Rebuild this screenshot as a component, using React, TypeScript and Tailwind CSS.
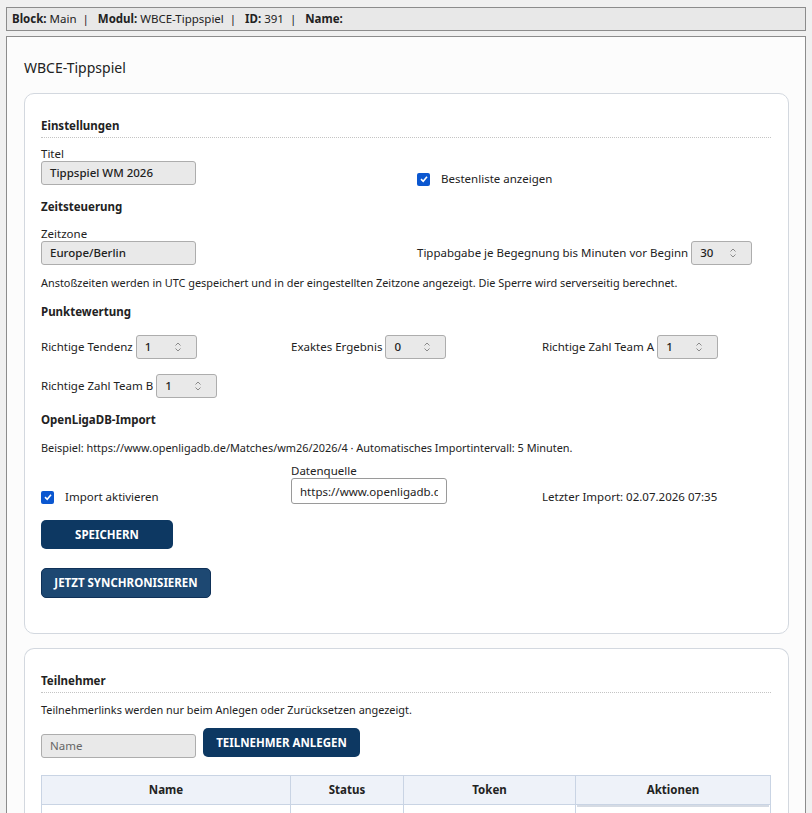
import React from 'react';

const Spin = () => (
  <svg width="8" height="12" viewBox="0 0 8 12" className="shrink-0">
    <polyline points="1.5,4.5 4,2 6.5,4.5" fill="none" stroke="#8a8a8a" strokeWidth="1" />
    <polyline points="1.5,7.5 4,10 6.5,7.5" fill="none" stroke="#8a8a8a" strokeWidth="1" />
  </svg>
);

const Check = () => (
  <span className="inline-flex h-[13px] w-[13px] shrink-0 items-center justify-center rounded-[2px] bg-[#0b57d0]">
    <svg width="10" height="10" viewBox="0 0 10 10">
      <polyline points="2,5.2 4.2,7.3 8,2.8" fill="none" stroke="#fff" strokeWidth="1.6" />
    </svg>
  </span>
);

const NumberBox = ({ value }: { value: string }) => (
  <div className="flex h-[24px] w-[61px] shrink-0 items-center justify-between rounded-[3px] border border-[#adadad] bg-[#e9e9e9] pl-[8px] pr-[14px] font-medium">
    <span>{value}</span>
    <Spin />
  </div>
);

const GreyInput = ({ value, placeholder }: { value?: string; placeholder?: string }) => (
  <div className="flex h-[24px] w-[155px] items-center rounded-[3px] border border-[#adadad] bg-[#e9e9e9] px-[8px]">
    {value ? <span className="font-medium">{value}</span> : <span className="text-[#666]">{placeholder}</span>}
  </div>
);

const Heading = ({ children }: { children: React.ReactNode }) => (
  <div className="font-bold leading-[16px]">{children}</div>
);

const Section = ({ children }: { children: React.ReactNode }) => (
  <div className="border-b border-dotted border-[#c4c4c4] pb-[3px] font-bold leading-[16px]">{children}</div>
);

export default function App() {
  return (
    <div className="min-h-screen bg-[#f0f0f0] px-[6px] pt-[7px] font-['Noto_Sans',sans-serif] text-[11.5px] text-[#222]">
      <div className="flex h-[24px] items-center border border-[#8c8c8c] bg-[#e8e8e8] px-[5px] leading-[16px]">
        <b>Block:</b>&nbsp;Main&nbsp;&nbsp;|&nbsp;&nbsp;&nbsp;<b>Modul:</b>&nbsp;WBCE-Tippspiel&nbsp;&nbsp;|&nbsp;&nbsp;&nbsp;<b>ID:</b>&nbsp;391&nbsp;&nbsp;|&nbsp;&nbsp;&nbsp;<b>Name:</b>
      </div>

      <div className="mt-[5px] border border-b-0 border-[#8c8c8c] bg-[#fcfcfc] pl-[17px] pr-[16px] pt-[21px]">
        <h1 className="text-[14px] leading-[20px]">WBCE-Tippspiel</h1>

        <div className="mt-[15px] rounded-[10px] border border-[#d3d8df] bg-white pb-[35px] pl-[16px] pr-[17px] pt-[24px]">
          <Section>Einstellungen</Section>

          <div className="mt-[9px] grid grid-cols-[376px_1fr]">
            <div>
              <div className="leading-[14px]">Titel</div>
              <GreyInput value="Tippspiel WM 2026" />
            </div>
            <div className="flex items-center gap-[11px] pt-[24px] leading-[16px]">
              <Check />
              <span>Bestenliste anzeigen</span>
            </div>
          </div>

          <div className="mt-[12px]">
            <Heading>Zeitsteuerung</Heading>
          </div>

          <div className="mt-[12px] grid grid-cols-[376px_1fr]">
            <div>
              <div className="leading-[14px]">Zeitzone</div>
              <GreyInput value="Europe/Berlin" />
            </div>
            <div className="flex items-center gap-[3px] self-end">
              <span>Tippabgabe je Begegnung bis Minuten vor Beginn</span>
              <NumberBox value="30" />
            </div>
          </div>

          <p className="mt-[10px] text-[10.9px] leading-[16px]">
            Anstoßzeiten werden in UTC gespeichert und in der eingestellten Zeitzone angezeigt. Die Sperre wird serverseitig berechnet.
          </p>

          <div className="mt-[13px]">
            <Heading>Punktewertung</Heading>
          </div>

          <div className="mt-[15px] grid grid-cols-[250px_251px_1fr] gap-y-[15px]">
            <div className="flex items-center gap-[3px]">
              <span>Richtige Tendenz</span>
              <NumberBox value="1" />
            </div>
            <div className="flex items-center gap-[3px]">
              <span>Exaktes Ergebnis</span>
              <NumberBox value="0" />
            </div>
            <div className="flex items-center gap-[3px]">
              <span>Richtige Zahl Team A</span>
              <NumberBox value="1" />
            </div>
            <div className="flex items-center gap-[3px]">
              <span>Richtige Zahl Team B</span>
              <NumberBox value="1" />
            </div>
          </div>

          <div className="mt-[14px]">
            <Heading>OpenLigaDB-Import</Heading>
          </div>

          <p className="mt-[12px] text-[10.9px] leading-[16px]">
            Beispiel: https://www.openligadb.de/Matches/wm26/2026/4 · Automatisches Importintervall: 5 Minuten.
          </p>

          <div className="mt-[8px] grid grid-cols-[250px_251px_1fr] items-end">
            <div className="flex items-center gap-[11px] leading-[14px]">
              <Check />
              <span>Import aktivieren</span>
            </div>
            <div>
              <div className="leading-[14px]">Datenquelle</div>
              <input
                readOnly
                value="https://www.openligadb.de/Matches/wm26/2026/4"
                className="h-[26px] w-[156px] rounded-[3px] border border-[#9a9a9a] bg-white px-[8px] text-[11.5px] text-[#222] outline-none"
              />
            </div>
            <div className="leading-[14px]">Letzter Import: 02.07.2026 07:35</div>
          </div>

          <button className="mt-[16px] flex h-[29px] w-[132px] items-center justify-center rounded-[5px] bg-[#0d3862] text-[11.5px] font-bold text-white">
            SPEICHERN
          </button>

          <button className="mt-[19px] flex h-[30px] w-[170px] items-center justify-center rounded-[5px] border border-[#0f3158] bg-[#1d4872] text-[11.5px] font-bold text-white">
            JETZT SYNCHRONISIEREN
          </button>
        </div>

        <div className="mt-[14px] rounded-t-[10px] border border-b-0 border-[#d3d8df] bg-white pl-[16px] pr-[17px] pt-[24px]">
          <Section>Teilnehmer</Section>

          <p className="mt-[9px] text-[10.9px] leading-[16px]">
            Teilnehmerlinks werden nur beim Anlegen oder Zurücksetzen angezeigt.
          </p>

          <div className="mt-[10px] flex items-start gap-[7px]">
            <div className="mt-[6px]">
              <GreyInput placeholder="Name" />
            </div>
            <button className="flex h-[29px] w-[157px] items-center justify-center rounded-[5px] bg-[#0d3862] text-[11.5px] font-bold text-white">
              TEILNEHMER ANLEGEN
            </button>
          </div>

          <table className="mt-[17px] w-full table-fixed border-collapse">
            <colgroup>
              <col className="w-[249px]" />
              <col className="w-[113px]" />
              <col className="w-[172px]" />
              <col />
            </colgroup>
            <thead>
              <tr className="bg-[#eef2f9]">
                <th className="h-[29px] border border-[#c9d4e4] font-bold">Name</th>
                <th className="h-[29px] border border-[#c9d4e4] font-bold">Status</th>
                <th className="h-[29px] border border-[#c9d4e4] font-bold">Token</th>
                <th className="h-[29px] border border-[#c9d4e4] font-bold">Aktionen</th>
              </tr>
            </thead>
            <tbody>
              <tr>
                <td className="h-[30px] border border-[#c9d4e4]"></td>
                <td className="h-[30px] border border-[#c9d4e4]"></td>
                <td className="h-[30px] border border-[#c9d4e4]"></td>
                <td className="h-[30px] border border-[#c9d4e4] px-[1px] align-top">
                  <div className="h-[28px] border-t-2 border-[#d5dbe4]"></div>
                </td>
              </tr>
            </tbody>
          </table>
        </div>
      </div>
    </div>
  );
}
